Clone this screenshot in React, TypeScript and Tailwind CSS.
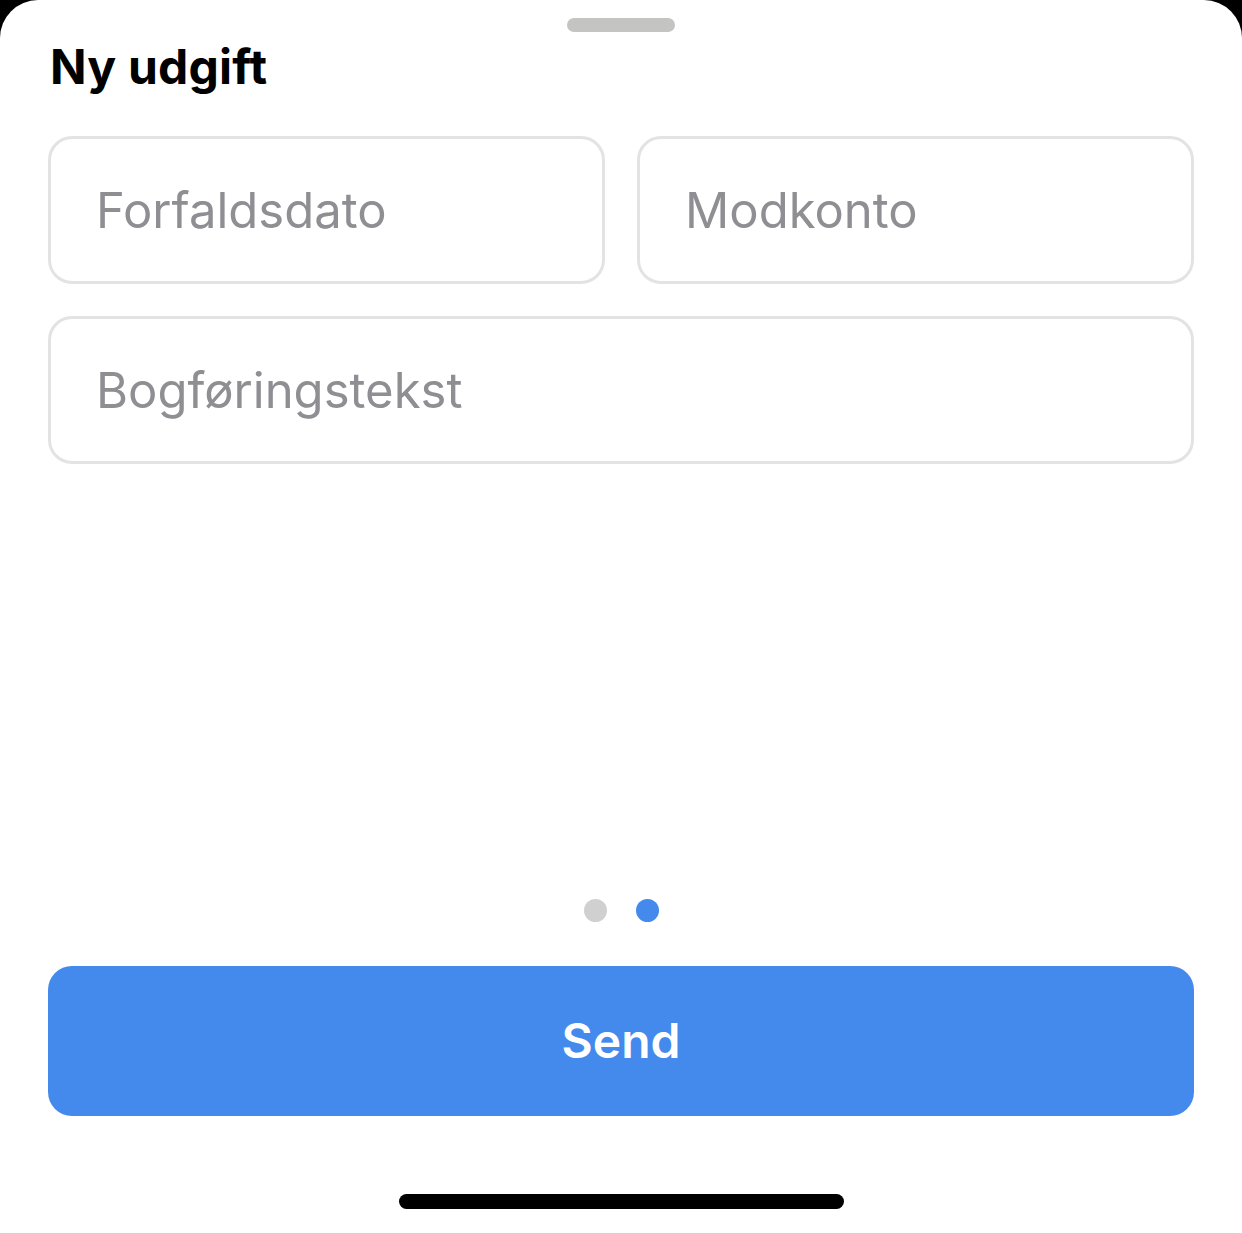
import * as React from "react"

function Field({ placeholder, className = "" }: { placeholder: string; className?: string }) {
  return (
    <div
      className={`flex h-[148px] items-center rounded-[24px] border-[3px] border-[#e3e3e3] bg-white pl-[45px] ${className}`}
    >
      <span className="text-[49px] leading-none text-[#8e8e93]">{placeholder}</span>
    </div>
  )
}

export default function App() {
  return (
    <div
      className="h-[1233px] w-[1242px] bg-black"
      style={{ fontFamily: 'Inter, "Noto Sans", sans-serif' }}
    >
      <div className="flex h-full flex-col rounded-t-[38px] bg-white">
        {/* sheet grabber */}
        <div className="mx-auto mt-[18px] h-[14px] w-[108px] rounded-full bg-[#c4c5c3]" />

        <h1 className="mt-[6px] px-[50px] text-[48px] font-bold leading-[58px] tracking-[0.2px] text-black">
          Ny udgift
        </h1>

        <div className="mt-[40px] px-[48px]">
          <div className="grid grid-cols-2 gap-[32px]">
            <Field placeholder="Forfaldsdato" />
            <Field placeholder="Modkonto" />
          </div>
          <Field placeholder="Bogføringstekst" className="mt-[32px]" />
        </div>

        <div className="flex-1" />

        {/* page dots */}
        <div className="flex justify-center gap-[29px]">
          <span className="h-[23px] w-[23px] rounded-full bg-[#d0d0d0]" />
          <span className="h-[23px] w-[23px] rounded-full bg-[#4489ec]" />
        </div>

        <div className="mt-[44px] px-[48px]">
          <button
            type="button"
            className="flex h-[150px] w-full items-center justify-center rounded-[24px] bg-[#4489ec] text-[48px] font-semibold text-white"
          >
            Send
          </button>
        </div>

        {/* home indicator */}
        <div className="mx-auto mb-[24px] mt-[78px] h-[15px] w-[445px] rounded-full bg-black" />
      </div>
    </div>
  )
}
